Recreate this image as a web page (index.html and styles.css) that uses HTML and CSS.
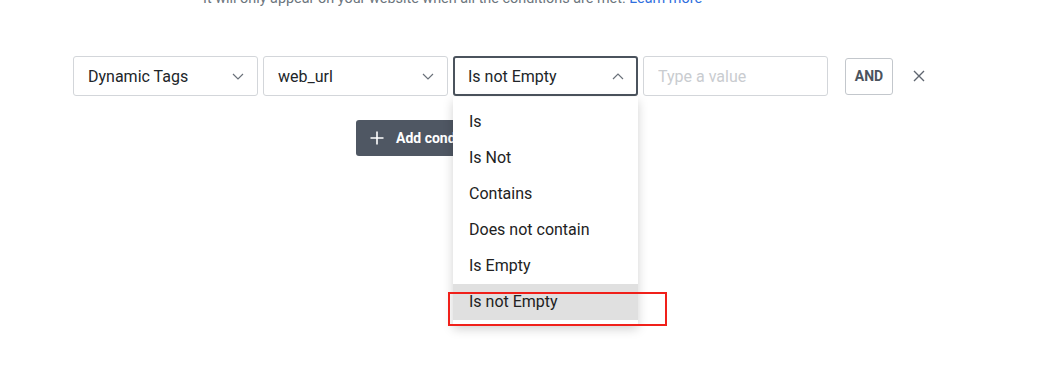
FILE: index.html
```html
<!DOCTYPE html>
<html>
<head>
  <title>Conditions</title>
  <link rel="stylesheet" href="styles.css">
</head>
<body>
  <div class="page">
    <!-- Helper text (scrolled partly out of view) -->
    <p class="hint">It will only appear on your website when all the conditions are met. <a href="#">Learn more</a></p>

    <!-- Condition row -->
    <div class="condition-row">
      <div class="select">
        <span>Dynamic Tags</span>
        <svg class="chevron" viewBox="0 0 12 7"><path d="M1 1l5 5 5-5" /></svg>
      </div>
      <div class="select">
        <span>web_url</span>
        <svg class="chevron" viewBox="0 0 12 7"><path d="M1 1l5 5 5-5" /></svg>
      </div>
      <div class="select-wrap">
        <div class="select open">
          <span>Is not Empty</span>
          <svg class="chevron" viewBox="0 0 12 7"><path d="M1 6l5-5 5 5" /></svg>
        </div>
        <!-- Open dropdown menu -->
        <ul class="menu">
          <li>Is</li>
          <li>Is Not</li>
          <li>Contains</li>
          <li>Does not contain</li>
          <li>Is Empty</li>
          <li class="active">Is not Empty</li>
        </ul>
        <div class="highlight-box"></div>
      </div>
      <input type="text" class="value-input" placeholder="Type a value">
      <button class="and-button">AND</button>
      <svg class="remove" viewBox="0 0 12 12"><path d="M1 1l10 10M11 1L1 11" /></svg>
    </div>

    <!-- Add condition button -->
    <button class="add-button">
      <svg viewBox="0 0 14 14"><path d="M7 0.5v13M0.5 7h13" /></svg>
      Add condition
    </button>
  </div>
</body>
</html>
```

FILE: styles.css
```css
body {
  font-family: Roboto, "Liberation Sans", sans-serif;
  margin: 0;
  padding: 0;
  background-color: #fff;
  color: #212529;
}

.page {
  min-height: 371px;
  padding-top: 1px;
  overflow: hidden;
}

.hint {
  margin: -12px 0 0 203px;
  font-size: 14.4px;
  line-height: 20px;
  color: #6c757d;
}

.hint a {
  color: #2f6fde;
  text-decoration: none;
}

.condition-row {
  display: flex;
  align-items: center;
  gap: 5px;
  margin: 47px 0 0 73px;
}

.select {
  box-sizing: border-box;
  width: 185px;
  height: 40px;
  padding: 0 13px 0 14px;
  display: flex;
  justify-content: space-between;
  align-items: center;
  border: 1px solid #d3d6da;
  border-radius: 3px;
  font-size: 16px;
  background-color: #fff;
}

.select.open {
  border-color: #4b535d;
  border-width: 2px;
  padding: 0 12px 0 13px;
}

.chevron {
  width: 12px;
  height: 7px;
  fill: none;
  stroke: #6a717a;
  stroke-width: 1.2;
}

.select-wrap {
  position: relative;
}

.menu {
  position: absolute;
  top: 41px;
  left: 0;
  width: 185px;
  margin: 0;
  padding: 7px 0 5px;
  list-style: none;
  background-color: #fff;
  box-shadow: 0 4px 10px rgba(0, 0, 0, 0.18);
  z-index: 2;
}

.menu li {
  height: 36px;
  line-height: 36px;
  padding-left: 16px;
  font-size: 16px;
  color: #222;
}

.menu li.active {
  background-color: #e0e0e0;
}

/* Red annotation frame */
.highlight-box {
  position: absolute;
  top: 236px;
  left: -5px;
  width: 215px;
  height: 30px;
  border: 2px solid #f0201a;
  z-index: 3;
}

.value-input {
  box-sizing: border-box;
  width: 185px;
  height: 40px;
  padding: 0 14px;
  border: 1px solid #d3d6da;
  border-radius: 3px;
  font-family: inherit;
  font-size: 16px;
}

.value-input::placeholder {
  color: #c9ccd0;
}

.and-button {
  margin-left: 12px;
  width: 48px;
  height: 37px;
  padding: 0;
  background-color: #fff;
  border: 1px solid #c3c7cc;
  border-radius: 3px;
  font-family: inherit;
  font-size: 14px;
  font-weight: bold;
  color: #4b535d;
}

.remove {
  margin-left: 15px;
  width: 12px;
  height: 12px;
  fill: none;
  stroke: #5f6670;
  stroke-width: 1.4;
}

.add-button {
  margin: 24px 0 0 356px;
  height: 36px;
  width: 150px;
  padding: 0 14px;
  display: flex;
  align-items: center;
  gap: 12px;
  background-color: #4f5763;
  color: #fff;
  border: none;
  border-radius: 3px;
  font-family: inherit;
  font-size: 14px;
  font-weight: bold;
}

.add-button svg {
  width: 14px;
  height: 14px;
  fill: none;
  stroke: #fff;
  stroke-width: 1.6;
}
```
